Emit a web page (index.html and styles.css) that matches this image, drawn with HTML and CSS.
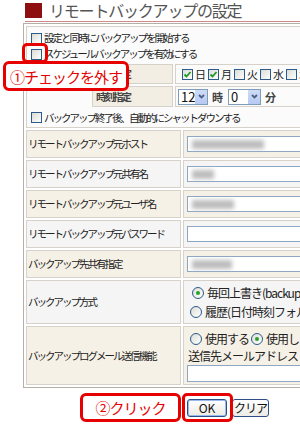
FILE: index.html
```html
<!DOCTYPE html>
<html lang="ja">

<head>
  <meta charset="UTF-8">
  <title>リモートバックアップの設定</title>
  <link rel="stylesheet" href="styles.css">
</head>

<body>
  <div class="page">
    <h1 class="title"><span class="mark"></span>リモートバックアップの設定</h1>

    <table class="settings">
      <tr>
        <td colspan="2" class="options">
          <div class="opt"><span class="cb"></span>設定と同時にバックアップを開始する</div>
          <div class="opt"><span class="cb"></span>スケジュールバックアップを有効にする</div>
          <table class="sched">
            <tr>
              <th>曜日指定</th>
              <td>
                <div class="days">
                  <span class="day"><span class="cb on"><svg viewBox="0 0 9 9"><path d="M1.5 4.5l2 2 4-4.5" /></svg></span>日</span>
                  <span class="day"><span class="cb on"><svg viewBox="0 0 9 9"><path d="M1.5 4.5l2 2 4-4.5" /></svg></span>月</span>
                  <span class="day"><span class="cb"></span>火</span>
                  <span class="day"><span class="cb"></span>水</span>
                  <span class="day"><span class="cb"></span>木</span>
                  <span class="day"><span class="cb"></span>金</span>
                  <span class="day"><span class="cb"></span>土</span>
                </div>
              </td>
            </tr>
            <tr>
              <th>時刻指定</th>
              <td>
                <div class="time">
                  <span class="sel"><span class="val">12</span><span class="drop"><svg viewBox="0 0 9 9"><path d="M2 3l2.5 2.5L7 3" /></svg></span></span>
                  <span class="unit">時</span>
                  <span class="sel wide"><span class="val">0</span><span class="drop"><svg viewBox="0 0 9 9"><path d="M2 3l2.5 2.5L7 3" /></svg></span></span>
                  <span class="unit">分</span>
                </div>
              </td>
            </tr>
          </table>
          <div class="opt last"><span class="cb"></span>バックアップ終了後、自動的にシャットダウンする</div>
        </td>
      </tr>
      <tr class="beige">
        <th>リモートバックアップ元ホスト</th>
        <td><span class="field"><span class="blur w-host"></span></span></td>
      </tr>
      <tr class="gray">
        <th>リモートバックアップ元共有名</th>
        <td><span class="field"><span class="blur w-share"></span></span></td>
      </tr>
      <tr class="beige">
        <th>リモートバックアップ元ユーザ名</th>
        <td><span class="field"><span class="blur w-user"></span></span></td>
      </tr>
      <tr class="gray">
        <th>リモートバックアップ元パスワード</th>
        <td><span class="field"></span></td>
      </tr>
      <tr class="beige">
        <th>バックアップ先共有指定</th>
        <td><span class="field"><span class="blur w-dest"></span></span></td>
      </tr>
      <tr class="gray tall">
        <th>バックアップ方式</th>
        <td>
          <div class="radio-line"><span class="rb on"></span>毎回上書き(backupフォルダ)</div>
          <div class="radio-line"><span class="rb"></span>履歴(日付時刻フォルダ)</div>
        </td>
      </tr>
      <tr class="beige mail">
        <th>バックアップログメール送信機能</th>
        <td>
          <div class="radio-line"><span class="rb"></span>使用する <span class="rb on"></span>使用しない</div>
          <div class="caption">送信先メールアドレス</div>
          <span class="field"></span>
        </td>
      </tr>
    </table>

    <div class="buttons">
      <button class="btn ok">OK</button>
      <button class="btn">クリア</button>
    </div>

    <div class="mark-box check"></div>
    <div class="callout first">①チェックを外す</div>
    <div class="callout second">②クリック</div>
    <div class="mark-box okbox"></div>
  </div>
</body>

</html>
```

FILE: styles.css
```css
body {
  margin: 0;
  background: #fff;
  font-family: "Noto Sans CJK JP", sans-serif;
  color: #222;
  overflow: hidden;
}

.page {
  position: relative;
  width: 300px;
  height: 434px;
  overflow: hidden;
}

.title {
  margin: 0 0 0 25px;
  height: 21px;
  border-bottom: 1px solid #d08a8a;
  font-size: 16px;
  font-weight: normal;
  line-height: 21px;
  letter-spacing: -1.2px;
  color: #555;
  white-space: nowrap;
  display: flex;
  align-items: center;
}

.mark {
  width: 17px;
  height: 15px;
  background: #8e0f0f;
  margin-right: 7px;
}

.settings {
  margin: 1px 0 0 23px;
  width: 360px;
  border: 1px solid #b4b0a8;
  border-spacing: 2px;
  font-size: 10.5px;
  line-height: 14px;
  letter-spacing: -2px;
  white-space: nowrap;
}

.settings th,
.settings td {
  border: 1px solid #d6d2ca;
  padding: 0;
  font-weight: normal;
  text-align: left;
}

.settings > tbody > tr > th {
  width: 152px;
  padding-left: 1px;
}

.settings > tbody > tr > td {
  padding-left: 3px;
}

.beige > th,
.beige > td {
  background: #f6f1e6;
  height: 26px;
}

.gray > th,
.gray > td {
  background: #f5f5f5;
  height: 26px;
}

.tall > th,
.tall > td {
  height: 42px;
}

.mail > th,
.mail > td {
  height: 57px;
}

.options {
  background: #fbfbfb;
  padding: 3px 0 1px 4px !important;
}

.opt {
  height: 16px;
  display: flex;
  align-items: center;
}

.opt.last {
  height: 17px;
}

.cb {
  display: inline-flex;
  flex: none;
  box-sizing: border-box;
  width: 11px;
  height: 11px;
  border: 1px solid #2b5a8c;
  background: linear-gradient(135deg, #dcdcd6, #fdfdfc);
  margin-right: 2px;
}

.cb svg {
  width: 9px;
  height: 9px;
  fill: none;
  stroke: #1f9a1f;
  stroke-width: 1.8;
}

.sched {
  margin: 0 0 0 59px;
  border-spacing: 2px;
  width: 280px;
  table-layout: fixed;
}

.sched th,
.sched td {
  border: 1px solid #d6d2ca;
  padding: 0;
}

.sched th {
  width: 76px;
  background: #f3eee3;
  padding-left: 3px;
  font-weight: bold;
  color: #444;
}

.sched td {
  background: #fbfbfb;
  padding-left: 2px;
}

.days {
  display: flex;
  align-items: center;
  height: 18px;
  padding-left: 4px;
  font-size: 11px;
  letter-spacing: 0;
}

.day {
  display: flex;
  align-items: center;
  width: 26px;
  flex: none;
}

.time {
  display: flex;
  align-items: center;
  height: 19px;
}

.sel {
  display: inline-flex;
  box-sizing: border-box;
  width: 30px;
  height: 16px;
  border: 1px solid #7f9db9;
  background: #fff;
  align-items: center;
  justify-content: space-between;
}

.sel.wide {
  width: 33px;
}

.val {
  font-size: 13px;
  letter-spacing: 0;
  padding-left: 2px;
  color: #111;
}

.drop {
  display: flex;
  width: 12px;
  height: 14px;
  background: linear-gradient(#cfdcf7, #b6c9f2);
  align-items: center;
  justify-content: center;
}

.drop svg {
  width: 9px;
  height: 9px;
  fill: none;
  stroke: #4d6185;
  stroke-width: 1.8;
}

.unit {
  font-weight: bold;
  font-size: 11px;
  color: #444;
  margin: 0 5px 0 4px;
  letter-spacing: 0;
}

.field {
  display: block;
  box-sizing: border-box;
  width: 150px;
  height: 16px;
  border: 1px solid #8ea8c4;
  background: #fff;
  padding: 3px 0 0 4px;
}

.blur {
  display: block;
  height: 9px;
  background: #bdbdbd;
  filter: blur(2px);
}

.w-host {
  width: 72px;
}

.w-share {
  width: 22px;
}

.w-user {
  width: 42px;
}

.w-dest {
  width: 40px;
}

.radio-line {
  display: flex;
  align-items: center;
  height: 19px;
  font-size: 12px;
  letter-spacing: -1px;
  padding-left: 3px;
}

.rb {
  display: inline-flex;
  box-sizing: border-box;
  width: 12px;
  height: 12px;
  border: 1px solid #2b5a8c;
  border-radius: 50%;
  background: linear-gradient(135deg, #dcdcd6, #fff);
  margin-right: 3px;
  align-items: center;
  justify-content: center;
}

.rb.on::after {
  content: "";
  width: 4px;
  height: 4px;
  border-radius: 50%;
  background: #2aa02a;
}

.rb.on {
  margin-left: 2px;
}

.caption {
  font-size: 12px;
  letter-spacing: -1px;
  padding-left: 1px;
  height: 15px;
  line-height: 15px;
}

.mail .field {
  height: 17px;
  margin-top: 2px;
}

.buttons {
  margin: 11px 0 0 187px;
  display: flex;
  gap: 5px;
}

.btn {
  height: 18px;
  padding: 0;
  border: 1px solid #2d4f86;
  border-radius: 3px;
  background: linear-gradient(#ffffff, #ecebe5);
  font-family: "Noto Sans CJK JP", sans-serif;
  font-size: 12px;
  line-height: 14px;
  color: #111;
}

.btn.ok {
  width: 40px;
  box-shadow: inset 0 0 0 1px #9ab9ec;
}

.btn:not(.ok) {
  width: 37px;
  letter-spacing: -1px;
}

.mark-box {
  position: absolute;
  box-sizing: border-box;
  border: 3px solid #e60000;
  border-radius: 5px;
}

.mark-box.check {
  left: 22px;
  top: 43px;
  width: 26px;
  height: 20px;
}

.mark-box.okbox {
  left: 182px;
  top: 393px;
  width: 51px;
  height: 29px;
}

.callout {
  position: absolute;
  box-sizing: border-box;
  border: 3px solid #e60000;
  border-radius: 6px;
  background: #fff;
  color: #e60000;
  font-size: 15px;
  letter-spacing: -1px;
  display: flex;
  align-items: center;
  justify-content: center;
  white-space: nowrap;
}

.callout.first {
  left: 3px;
  top: 61px;
  width: 126px;
  height: 30px;
}

.callout.second {
  left: 80px;
  top: 393px;
  width: 101px;
  height: 29px;
}
```
